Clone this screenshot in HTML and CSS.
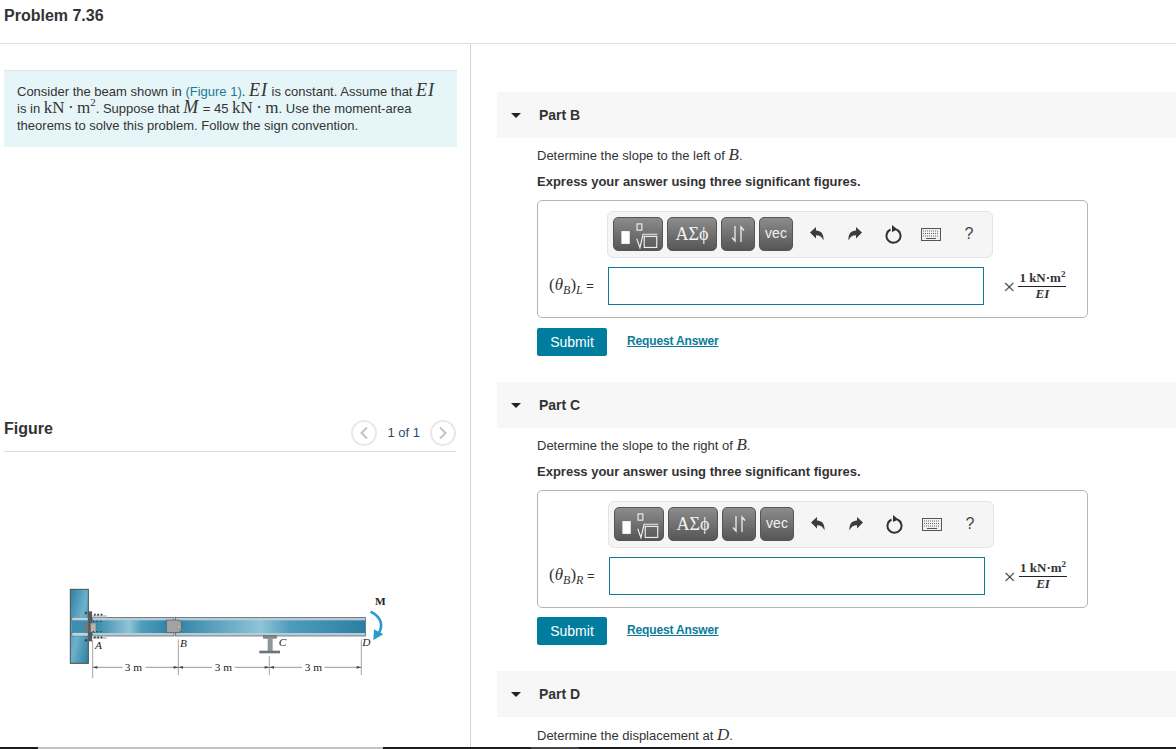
FILE: index.html
```html
<!DOCTYPE html>
<html>
<head>
    <meta charset="UTF-8">
    <title>Problem 7.36</title>
    <link rel="stylesheet" href="styles.css">
</head>
<body>
    <header class="page-title">Problem 7.36</header>

    <div class="columns">
        <aside class="left-col">
            <div class="intro">
                Consider the beam shown in <a class="fig-link">(Figure 1)</a>. <span class="math it big wide-math">EI</span> is constant. Assume that <span class="math it big wide-math">EI</span>
                is in <span class="math big">kN&#8201;·&#8201;m<sup>2</sup></span>. Suppose that <span class="math it big wide-math">M</span> = 45 <span class="math big">kN&#8201;·&#8201;m</span>. Use the moment-area
                theorems to solve this problem. Follow the sign convention.
            </div>

            <div class="figure-head">
                <h2>Figure</h2>
                <div class="pager">
                    <span class="pager-btn"><svg width="10" height="14" viewBox="0 0 10 14"><path d="M8 1.5 2.5 7 8 12.5" fill="none" stroke="#b9c6d4" stroke-width="2"/></svg></span>
                    <span>1 of 1</span>
                    <span class="pager-btn"><svg width="10" height="14" viewBox="0 0 10 14"><path d="M2 1.5 7.500 7 2 12.500" fill="none" stroke="#b9c6d4" stroke-width="2"/></svg></span>
                </div>
            </div>

            <svg class="beam" width="350" height="100" viewBox="0 0 1050 300">
                <defs>
                    <linearGradient id="steel" x1="0" y1="0" x2="1" y2="0">
                        <stop offset="0" stop-color="#2f83a6"/>
                        <stop offset="0.45" stop-color="#8fc4d8"/>
                        <stop offset="0.6" stop-color="#4f9dbc"/>
                        <stop offset="1" stop-color="#2b7fa3"/>
                    </linearGradient>
                    <linearGradient id="wall" x1="0" y1="0" x2="1" y2="1">
                        <stop offset="0" stop-color="#2c7fa2"/>
                        <stop offset="0.5" stop-color="#6db2cb"/>
                        <stop offset="1" stop-color="#2c7fa2"/>
                    </linearGradient>
                    <filter id="soft"><feGaussianBlur stdDeviation="1"/></filter>
                </defs>
                <g filter="url(#soft)">
                    <!-- wall column -->
                    <rect x="61" y="28" width="54" height="222" fill="url(#wall)" stroke="#4a4f52" stroke-width="3"/>
                    <rect x="66" y="112" width="48" height="10" fill="#bcd6e0" stroke="#4a4f52" stroke-width="1"/>
                    <rect x="66" y="158" width="48" height="10" fill="#bcd6e0" stroke="#4a4f52" stroke-width="1"/>
                    <rect x="66" y="122" width="48" height="36" fill="#3b8fb0"/>
                    <rect x="104" y="128" width="24" height="26" fill="#777"/>
                    <rect x="115" y="94" width="11" height="90" fill="#55595c"/>
                    <circle cx="108" cy="99" r="4" fill="#444"/>
                    <circle cx="108" cy="181" r="4" fill="#444"/>
                    <!-- beam AB -->
                    <rect x="128" y="112" width="244" height="56" fill="#b6cdd7" stroke="#4a4f52" stroke-width="2"/>
                    <rect x="128" y="121" width="244" height="38" fill="url(#steel)"/>
                    <!-- angles and bolts at A -->
                    <rect x="126" y="105" width="44" height="7" fill="#c9cfd2"/>
                    <rect x="126" y="170" width="44" height="7" fill="#c9cfd2"/>
                    <path d="M132 104h5M142 104h5M152 104h5M132 172h5M142 172h5M152 172h5" stroke="#333" stroke-width="5"/>
                    <rect x="122" y="130" width="15" height="26" fill="#b8b3a6"/>
                    <path d="M128 124h4M139 124h4M150 124h4M128 155h4M139 155h4M150 155h4" stroke="#2c3b42" stroke-width="4"/>
                    <!-- beam BD -->
                    <rect x="376" y="112" width="570" height="56" fill="#b6cdd7" stroke="#4a4f52" stroke-width="2"/>
                    <rect x="376" y="121" width="570" height="38" fill="url(#steel)"/>
                    <!-- pin at B -->
                    <path d="M349 120h34q12 0 12 12v14q0 12-12 12h-34z" fill="#a0a2a3" stroke="#4a4f52" stroke-width="2"/>
                    <circle cx="386" cy="140" r="3.500" fill="#ddd" stroke="#555"/>
                    <!-- support at C -->
                    <rect x="640" y="167" width="40" height="8" fill="#7e8689" stroke="#444" stroke-width="1"/>
                    <rect x="653" y="175" width="15" height="38" fill="#8f979a"/>
                    <rect x="628" y="212" width="62" height="8" fill="#6e7477"/>
                    <!-- moment arrow -->
                    <path d="M962 95C996 112 1000 140 985 162" fill="none" stroke="#2b9ad0" stroke-width="8"/>
                    <path d="M970 180 972 148 1000 163z" fill="#2b9ad0"/>
                </g>
                <!-- dimensions -->
                <path d="M128 180V295M385 178V285M658 228V285M934 178V285" stroke="#777" stroke-width="2" fill="none"/>
                <path d="M128 262H218M286 262H385M385 262H486M554 262H658M658 262H756M824 262H934" stroke="#666" stroke-width="2" fill="none"/>
                <path d="M128 262l14-4v8zM385 262l-14-4v8zM385 262l14-4v8zM658 262l-14-4v8zM658 262l14-4v8zM934 262l-14-4v8z" fill="#444"/>
                <text class="dim" x="250" y="272" text-anchor="middle">3 m</text>
                <text class="dim" x="520" y="272" text-anchor="middle">3 m</text>
                <text class="dim" x="790" y="272" text-anchor="middle">3 m</text>
                <text class="pt" x="135" y="208">A</text>
                <text class="pt" x="390" y="200">B</text>
                <text class="pt" x="686" y="198">C</text>
                <text class="pt" x="937" y="198">D</text>
                <text class="moment" x="975" y="76">M</text>
            </svg>
        </aside>

        <main class="right-col">
            <section class="part">
                <div class="part-bar"><span class="caret"></span>Part B</div>
                <p class="question">Determine the slope to the left of <span class="math it big">B</span>.</p>
                <p class="hint">Express your answer using three significant figures.</p>
                <div class="answer-box">
                    <div class="toolbar">
                        <span class="tool-btn wide"><svg width="50" height="34" viewBox="0 0 50 34"><rect x="7.700" y="14" width="8.700" height="13.300" fill="#fff"/><rect x="24" y="6.500" width="5" height="6.500" fill="none" stroke="#eee" stroke-width="1.200"/><path d="M23.700 22 27 31.300 30.300 17.300H45.300" fill="none" stroke="#eee" stroke-width="1.200"/><rect x="31.500" y="19.500" width="13" height="11.500" fill="none" stroke="#eee" stroke-width="1.200"/></svg></span>
                        <span class="tool-btn wide greek">ΑΣϕ</span>
                        <span class="tool-btn arrows"><svg width="16" height="18" viewBox="0 0 16 18"><path d="M5 1V16L2 12.500M11 17V2L14 5.500" fill="none" stroke="#eee" stroke-width="1.300"/></svg></span>
                        <span class="tool-btn vec">vec</span>
                        <span class="tools">
                            <span class="tool"><svg width="14" height="14" viewBox="0 0 14 14"><path d="M0 5.500 6 0V3.500C11 3.500 14 7 13.500 13.500 12 10 10 8.200 6 8.200V11.500z" fill="#3c3c3c"/></svg></span>
                            <span class="tool"><svg width="14" height="14" viewBox="0 0 14 14"><path d="M14 5.500 8 0V3.500C3 3.500 0 7 .5 13.500 2 10 4 8.200 8 8.200V11.500z" fill="#3c3c3c"/></svg></span>
                            <span class="tool"><svg width="17" height="19" viewBox="0 0 17 19"><path d="M5.500 4.500A7 7 0 1 0 11.500 4.500" fill="none" stroke="#333" stroke-width="2"/><path d="M7 0 12.500 4.500 7 7z" fill="#333"/></svg></span>
                            <span class="tool"><svg width="20" height="13" viewBox="0 0 20 13"><rect x=".5" y=".5" width="19" height="12" fill="#f2f2f2" stroke="#555"/><path d="M2 3h16M2 5.500h16M2 8h16" stroke="#666" stroke-dasharray="1 1"/><path d="M5 10.500h10" stroke="#555"/></svg></span>
                            <span class="tool help">?</span>
                        </span>
                    </div>
                    <div class="answer-row">
                        <span class="var"><span class="math big">(<i>θ</i><sub>B</sub>)<sub>L</sub></span> =</span>
                        <span class="field"></span>
                        <span class="units">
                            <span class="times">×</span>
                            <span class="frac"><span class="num">1 kN·m<sup>2</sup></span><span class="den">EI</span></span>
                        </span>
                    </div>
                </div>
                <div class="actions"><span class="submit">Submit</span><a class="req">Request Answer</a></div>
            </section>

            <section class="part part-c">
                <div class="part-bar"><span class="caret"></span>Part C</div>
                <p class="question">Determine the slope to the right of <span class="math it big">B</span>.</p>
                <p class="hint">Express your answer using three significant figures.</p>
                <div class="answer-box">
                    <div class="toolbar">
                        <span class="tool-btn wide"><svg width="50" height="34" viewBox="0 0 50 34"><rect x="7.700" y="14" width="8.700" height="13.300" fill="#fff"/><rect x="24" y="6.500" width="5" height="6.500" fill="none" stroke="#eee" stroke-width="1.200"/><path d="M23.700 22 27 31.300 30.300 17.300H45.300" fill="none" stroke="#eee" stroke-width="1.200"/><rect x="31.500" y="19.500" width="13" height="11.500" fill="none" stroke="#eee" stroke-width="1.200"/></svg></span>
                        <span class="tool-btn wide greek">ΑΣϕ</span>
                        <span class="tool-btn arrows"><svg width="16" height="18" viewBox="0 0 16 18"><path d="M5 1V16L2 12.500M11 17V2L14 5.500" fill="none" stroke="#eee" stroke-width="1.300"/></svg></span>
                        <span class="tool-btn vec">vec</span>
                        <span class="tools">
                            <span class="tool"><svg width="14" height="14" viewBox="0 0 14 14"><path d="M0 5.500 6 0V3.500C11 3.500 14 7 13.500 13.500 12 10 10 8.200 6 8.200V11.500z" fill="#3c3c3c"/></svg></span>
                            <span class="tool"><svg width="14" height="14" viewBox="0 0 14 14"><path d="M14 5.500 8 0V3.500C3 3.500 0 7 .5 13.500 2 10 4 8.200 8 8.200V11.500z" fill="#3c3c3c"/></svg></span>
                            <span class="tool"><svg width="17" height="19" viewBox="0 0 17 19"><path d="M5.500 4.500A7 7 0 1 0 11.500 4.500" fill="none" stroke="#333" stroke-width="2"/><path d="M7 0 12.500 4.500 7 7z" fill="#333"/></svg></span>
                            <span class="tool"><svg width="20" height="13" viewBox="0 0 20 13"><rect x=".5" y=".5" width="19" height="12" fill="#f2f2f2" stroke="#555"/><path d="M2 3h16M2 5.500h16M2 8h16" stroke="#666" stroke-dasharray="1 1"/><path d="M5 10.500h10" stroke="#555"/></svg></span>
                            <span class="tool help">?</span>
                        </span>
                    </div>
                    <div class="answer-row">
                        <span class="var"><span class="math big">(<i>θ</i><sub>B</sub>)<sub>R</sub></span> =</span>
                        <span class="field"></span>
                        <span class="units">
                            <span class="times">×</span>
                            <span class="frac"><span class="num">1 kN·m<sup>2</sup></span><span class="den">EI</span></span>
                        </span>
                    </div>
                </div>
                <div class="actions"><span class="submit">Submit</span><a class="req">Request Answer</a></div>
            </section>

            <section class="part part-d">
                <div class="part-bar"><span class="caret"></span>Part D</div>
                <p class="question">Determine the displacement at <span class="math it big">D</span>.</p>
            </section>
        </main>
    </div>

    <div class="scrollbar"><span class="thumb"></span><span class="thumb-mid"></span></div>
</body>
</html>
```

FILE: styles.css
```css
/* page */
html, body {
    margin: 0;
    height: 749px;
    overflow: hidden;
}
body {
    font-family: "Liberation Sans", Arial, sans-serif;
    font-size: 13px;
    color: #333;
    background: #fff;
    position: relative;
}
p, h2 {
    margin: 0;
}

/* title bar */
.page-title {
    height: 43px;
    padding-left: 4px;
    line-height: 32px;
    font-size: 16px;
    font-weight: bold;
    border-bottom: 1px solid #dfe1e3;
}

.columns {
    display: flex;
    height: 705px;
}

/* left column */
.left-col {
    width: 470px;
    flex: none;
    border-right: 1px solid #cad7e2;
}
.intro {
    margin: 26px 13px 0 4px;
    padding: 12px 20px 14px 13px;
    height: 50px;
    line-height: 17px;
    background: #e6f5f7;
    border-top: 1px solid #dde6ea;
}
.fig-link {
    color: #1b7a99;
}
.math {
    font-family: "Liberation Serif", "Times New Roman", serif;
}
.math.it {
    font-style: italic;
}
.math.big {
    font-size: 17px;
    line-height: 14px;
}
.math.wide-math {
    font-size: 18px;
    letter-spacing: 1px;
}
.math sup {
    font-size: 11px;
    line-height: 0;
}

.figure-head {
    margin: 270px 14px 0 4px;
    height: 34px;
    display: flex;
    justify-content: space-between;
    align-items: center;
    border-bottom: 1px solid #dcdcdc;
}
.figure-head h2 {
    font-size: 16px;
    margin-top: -10px;
}
.pager {
    display: flex;
    align-items: center;
    gap: 10px;
    margin-top: -3px;
    color: #2f4a6b;
}
.pager-btn {
    width: 22px;
    height: 22px;
    border: 2px solid #e8e8e8;
    border-radius: 50%;
    display: flex;
    align-items: center;
    justify-content: center;
}
.beam {
    display: block;
    margin: 128px 0 0 50px;
}
.dim {
    font-family: "Liberation Serif", serif;
    font-size: 34px;
    fill: #222;
}
.pt {
    font-family: "Liberation Serif", serif;
    font-style: italic;
    font-size: 34px;
    fill: #222;
}
.moment {
    font-family: "Liberation Serif", serif;
    font-weight: bold;
    font-size: 34px;
    fill: #222;
}

/* right column */
.right-col {
    flex: 1;
    min-width: 0;
    padding: 48px 0 0 26px;
}
.part {
    padding-bottom: 26px;
}
.part-bar {
    height: 46px;
    margin-bottom: 7px;
    padding-left: 14px;
    display: flex;
    align-items: center;
    font-size: 14px;
    font-weight: bold;
    background: #f7f7f7;
}
.caret {
    width: 0;
    height: 0;
    margin-right: 18px;
    border-left: 5.5px solid transparent;
    border-right: 5.5px solid transparent;
    border-top: 5px solid #222;
}
.question {
    margin-left: 40px;
    padding-top: 1px;
    line-height: 20px;
}
.part-d .question {
    padding-top: 2px;
}
.hint {
    margin: 6px 0 8px 40px;
    line-height: 20px;
    font-weight: bold;
}

/* answer box */
.answer-box {
    width: 551px;
    height: 118px;
    margin-left: 40px;
    box-sizing: border-box;
    border: 1px solid #b5b5b5;
    border-radius: 5px;
    padding: 10px 0 0 11px;
}
.toolbar {
    width: 386px;
    height: 47px;
    box-sizing: border-box;
    margin-left: 58px;
    padding: 5px 0 0 5px;
    display: flex;
    gap: 4px;
    background: #f5f5f5;
    border: 1px solid #e4e4e4;
    border-radius: 6px;
}
.part-c .toolbar {
    margin-left: 59px;
}
.tool-btn {
    width: 34px;
    height: 34px;
    display: flex;
    align-items: center;
    justify-content: center;
    color: #f2f2f2;
    background: linear-gradient(#8c8c8c, #565656);
    border: 1px solid #555;
    box-sizing: border-box;
    border-radius: 5px;
    font-size: 14px;
}
.tool-btn.wide {
    width: 50px;
}
.greek {
    font-family: "Liberation Serif", "DejaVu Serif", serif;
    font-size: 18px;
}
.vec {
    padding-bottom: 3px;
}
.tools {
    display: flex;
    align-items: center;
    margin-left: 1px;
    height: 34px;
}
.tool {
    width: 38px;
    display: flex;
    justify-content: center;
}
.help {
    font-size: 16px;
    color: #444;
}
.answer-row {
    display: flex;
    align-items: center;
    margin-top: 9px;
}
.var {
    white-space: nowrap;
    margin-right: 14px;
    margin-top: -2px;
}
.var i {
    font-size: 17px;
}
.var sub {
    font-size: 12px;
    font-style: italic;
    line-height: 0;
}
.field {
    width: 376px;
    height: 38px;
    box-sizing: border-box;
    border: 1px solid #0a7c99;
    flex: none;
}
.units {
    margin-left: 19px;
    display: flex;
    align-items: center;
    font-family: "Liberation Serif", serif;
}
.times {
    font-size: 22px;
    color: #444;
    margin-right: 3px;
    margin-top: 2px;
}
.frac {
    display: inline-flex;
    flex-direction: column;
    align-items: center;
    font-size: 13px;
    line-height: 14px;
}
.num {
    font-weight: bold;
    padding: 0 1px 1px;
    border-bottom: 1px solid #222;
}
.num sup {
    font-size: 9px;
    line-height: 0;
}
.den {
    font-style: italic;
    font-weight: bold;
}

/* submit row */
.actions {
    margin: 10px 0 0 40px;
    display: flex;
    align-items: center;
    gap: 20px;
}
.part-c .actions {
    margin-top: 9px;
}
.submit {
    width: 70px;
    height: 28px;
    line-height: 28px;
    text-align: center;
    font-size: 14px;
    color: #fff;
    background: #007c9e;
    border-radius: 2px;
}
.req {
    color: #0a7c99;
    font-size: 12px;
    font-weight: bold;
    letter-spacing: -0.15px;
    text-decoration: underline;
    margin-top: -2px;
}

/* window scrollbar along the bottom edge */
.scrollbar {
    position: absolute;
    left: 0;
    right: 0;
    bottom: 0;
    height: 2px;
    background: #1c1c1c;
}
.thumb {
    position: absolute;
    left: 38px;
    width: 345px;
    height: 2px;
    background: #c2c2c2;
}
.thumb-mid {
    position: absolute;
    left: 531px;
    width: 48px;
    height: 2px;
    background: #444;
}
```
